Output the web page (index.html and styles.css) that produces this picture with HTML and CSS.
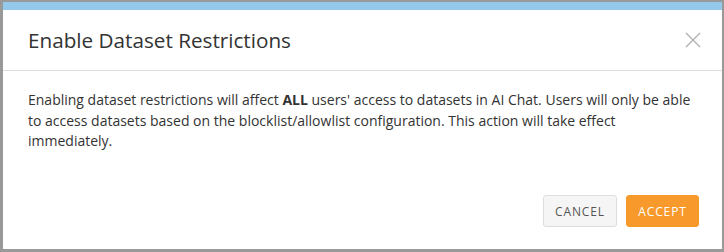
FILE: index.html
```html
<!DOCTYPE html>
<html>
<head>
<meta charset="utf-8">
<link rel="stylesheet" href="styles.css">
</head>
<body>
<div class="modal">
  <div class="modal-top"></div>
  <div class="modal-header">
    <h2 class="modal-title">Enable Dataset Restrictions</h2>
    <button class="close" aria-label="Close">
      <svg width="16" height="16" viewBox="0 0 16 16"><path d="M1 1 L15 15 M15 1 L1 15" stroke="#b0b0b0" stroke-width="1.4" fill="none"/></svg>
    </button>
  </div>
  <div class="modal-body">
    Enabling dataset restrictions will affect <b>ALL</b> users' access to datasets in AI Chat. Users will only be able to access datasets based on the blocklist/allowlist configuration. This action will take effect immediately.
  </div>
  <div class="modal-footer">
    <button class="btn btn-cancel">CANCEL</button>
    <button class="btn btn-accept">ACCEPT</button>
  </div>
</div>
</body>
</html>
```
FILE: styles.css
```css
html, body {
  margin: 0;
  padding: 0;
  height: 100%;
}
body {
  background: #999999;
  font-family: "Open Sans", "Liberation Sans", sans-serif;
  padding: 2px 2px 3px 3px;
  box-sizing: border-box;
  overflow: hidden;
}
.modal {
  background: #fff;
  height: 247px;
  display: flex;
  flex-direction: column;
}
.modal-top {
  height: 8px;
  background: #95c9ec;
}
.modal-header {
  display: flex;
  align-items: center;
  justify-content: space-between;
  height: 60px;
  padding: 0 21px 0 25px;
  border-bottom: 1px solid #dddddd;
}
.modal-title {
  margin: 0;
  font-size: 20.7px;
  font-weight: 400;
  color: #333;
}
.close {
  background: none;
  border: 0;
  padding: 0;
  width: 16px;
  height: 16px;
  display: flex;
}
.modal-body {
  padding: 19px 25px 0 25px;
  font-size: 14px;
  line-height: 20.6px;
  color: #333;
  flex: 1;
}
.modal-body b {
  font-weight: 700;
}
.modal-footer {
  display: flex;
  justify-content: flex-end;
  gap: 9px;
  padding: 0 23px 22px 0;
}
.btn {
  height: 32px;
  border-radius: 3px;
  font-family: "Open Sans", "Liberation Sans", sans-serif;
  font-size: 12px;
  letter-spacing: 0.9px;
  padding: 0;
  cursor: pointer;
}
.btn-cancel {
  width: 74px;
  background: #f5f5f5;
  border: 1px solid #dddddd;
  color: #555;
}
.btn-accept {
  width: 73px;
  background: #f89a2b;
  border: 1px solid #f89a2b;
  color: #fff;
}
```
